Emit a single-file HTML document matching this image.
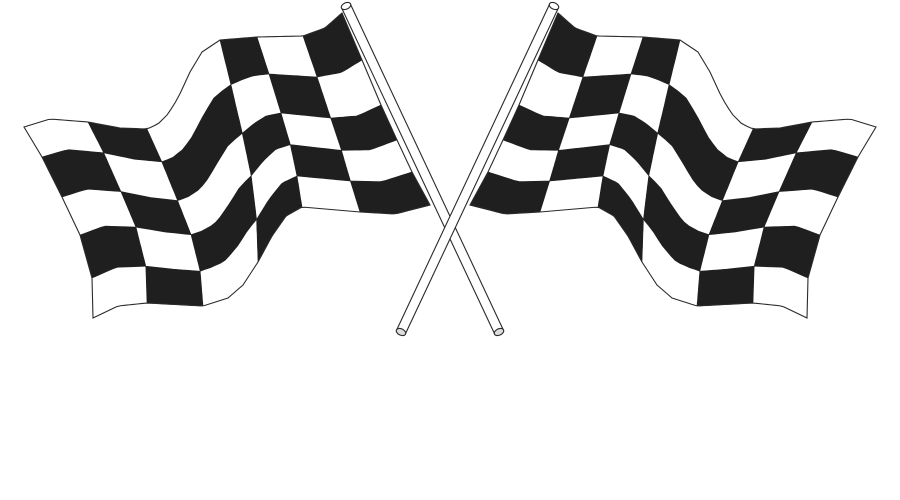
<!DOCTYPE html>
<html><head><meta charset="utf-8"><style>
html,body{margin:0;padding:0;background:#fff;}
svg{display:block;}
</style></head><body>
<svg id="s" width="900" height="500" viewBox="0 0 900 500" xmlns="http://www.w3.org/2000/svg">
<rect width="900" height="500" fill="#fff"/>
<g id="L"></g>
<g id="R" transform="translate(900,0) scale(-1,1)"></g>
</svg>
<script>
function lerpArr(a,t){
  for(let i=0;i<a.length-1;i++){
    if(t<=a[i+1][0]||i==a.length-2){
      const s=(t-a[i][0])/(a[i+1][0]-a[i][0]);
      return [a[i][1]+(a[i+1][1]-a[i][1])*s,a[i][2]+(a[i+1][2]-a[i][2])*s];
    }
  }
}
const T=[[0,24,127],[0.08,50,119],[1/6,88,122],[0.25,120,128],[2/6,147,129],[0.36,158,124],[0.39,168,114],[0.42,178,98],[0.45,190,72],[0.475,202,52],[0.5,220,40],[4/6,257,37],[5/6,303,36],[0.92,325,28],[1,342,13]];
const B=[[0,93,318],[0.08,118,306],[1/6,147,303],[2/6,203,306],[0.4,228,298],[0.45,243,285],[0.5,258,262],[0.55,272,236],[0.6,286,216],[4/6,302,207],[5/6,360,212],[0.92,395,214],[1,430,205]];
const Lf=[[0,24,127],[0.2,42,157],[0.4,62,197],[0.6,80,235],[0.8,92,278],[1,93,318]];
const Rt=[[0,342,13],[0.2,362,60],[0.4,381,105],[0.6,397,140],[0.8,412,172],[1,430,205]];
function P(u,v){
  const t=lerpArr(T,u),b=lerpArr(B,u),l=lerpArr(Lf,v),r=lerpArr(Rt,v);
  const c00=[24,127],c10=[342,13],c01=[93,318],c11=[430,205];
  const o=[];
  for(let k=0;k<2;k++){
    o[k]=(1-v)*t[k]+v*b[k]+(1-u)*l[k]+u*r[k]
      -((1-u)*(1-v)*c00[k]+u*(1-v)*c10[k]+(1-u)*v*c01[k]+u*v*c11[k]);
  }
  return o;
}
const NC=6,NR=5,S=12;
let h='';
function edge(u0,v0,u1,v1){
  let pts=[];
  for(let i=0;i<=S;i++){const p=P(u0+(u1-u0)*i/S,v0+(v1-v0)*i/S);pts.push(p[0].toFixed(1)+','+p[1].toFixed(1));}
  return pts;
}
let out=[];
for(let i=0;i<=80;i++){const p=P(i/80,0);out.push(p.join(','));}
for(let i=0;i<=30;i++){const p=P(1,i/30);out.push(p.join(','));}
for(let i=80;i>=0;i--){const p=P(i/80,1);out.push(p.join(','));}
for(let i=30;i>=0;i--){const p=P(0,i/30);out.push(p.join(','));}
h+='<polygon points="'+out.join(' ')+'" fill="#fff"/>';
for(let c=0;c<NC;c++)for(let r=0;r<NR;r++){
  if((c+r)%2==1){
    const u0=c/NC,u1=(c+1)/NC,v0=r/NR,v1=(r+1)/NR;
    const pts=[].concat(edge(u0,v0,u1,v0),edge(u1,v0,u1,v1),edge(u1,v1,u0,v1),edge(u0,v1,u0,v0));
    h+='<polygon points="'+pts.join(' ')+'" fill="#1f1f1f" stroke="#1f1f1f" stroke-width="0.6"/>';
  }
}
h+='<polygon points="'+out.join(' ')+'" fill="none" stroke="#2a2a2a" stroke-width="1.1"/>';
const ax=346,ay=6,bx=499,by=332;
const dx=bx-ax,dy=by-ay,len=Math.hypot(dx,dy),nx=-dy/len*4.8,ny=dx/len*4.8;
h+='<polygon points="'+(ax+nx)+','+(ay+ny)+' '+(bx+nx)+','+(by+ny)+' '+(bx-nx)+','+(by-ny)+' '+(ax-nx)+','+(ay-ny)+'" fill="#fff" stroke="#2a2a2a" stroke-width="1.1"/>';
h+='<ellipse cx="'+ax+'" cy="'+ay+'" rx="5" ry="3.2" transform="rotate(-25 '+ax+' '+ay+')" fill="#fff" stroke="#2a2a2a" stroke-width="1.1"/>';
h+='<ellipse cx="'+bx+'" cy="'+by+'" rx="5" ry="3.2" transform="rotate(-25 '+bx+' '+by+')" fill="#ddd" stroke="#2a2a2a" stroke-width="1.1"/>';
document.getElementById('L').innerHTML=h;
document.getElementById('R').innerHTML=h;
</script>
</body></html>
